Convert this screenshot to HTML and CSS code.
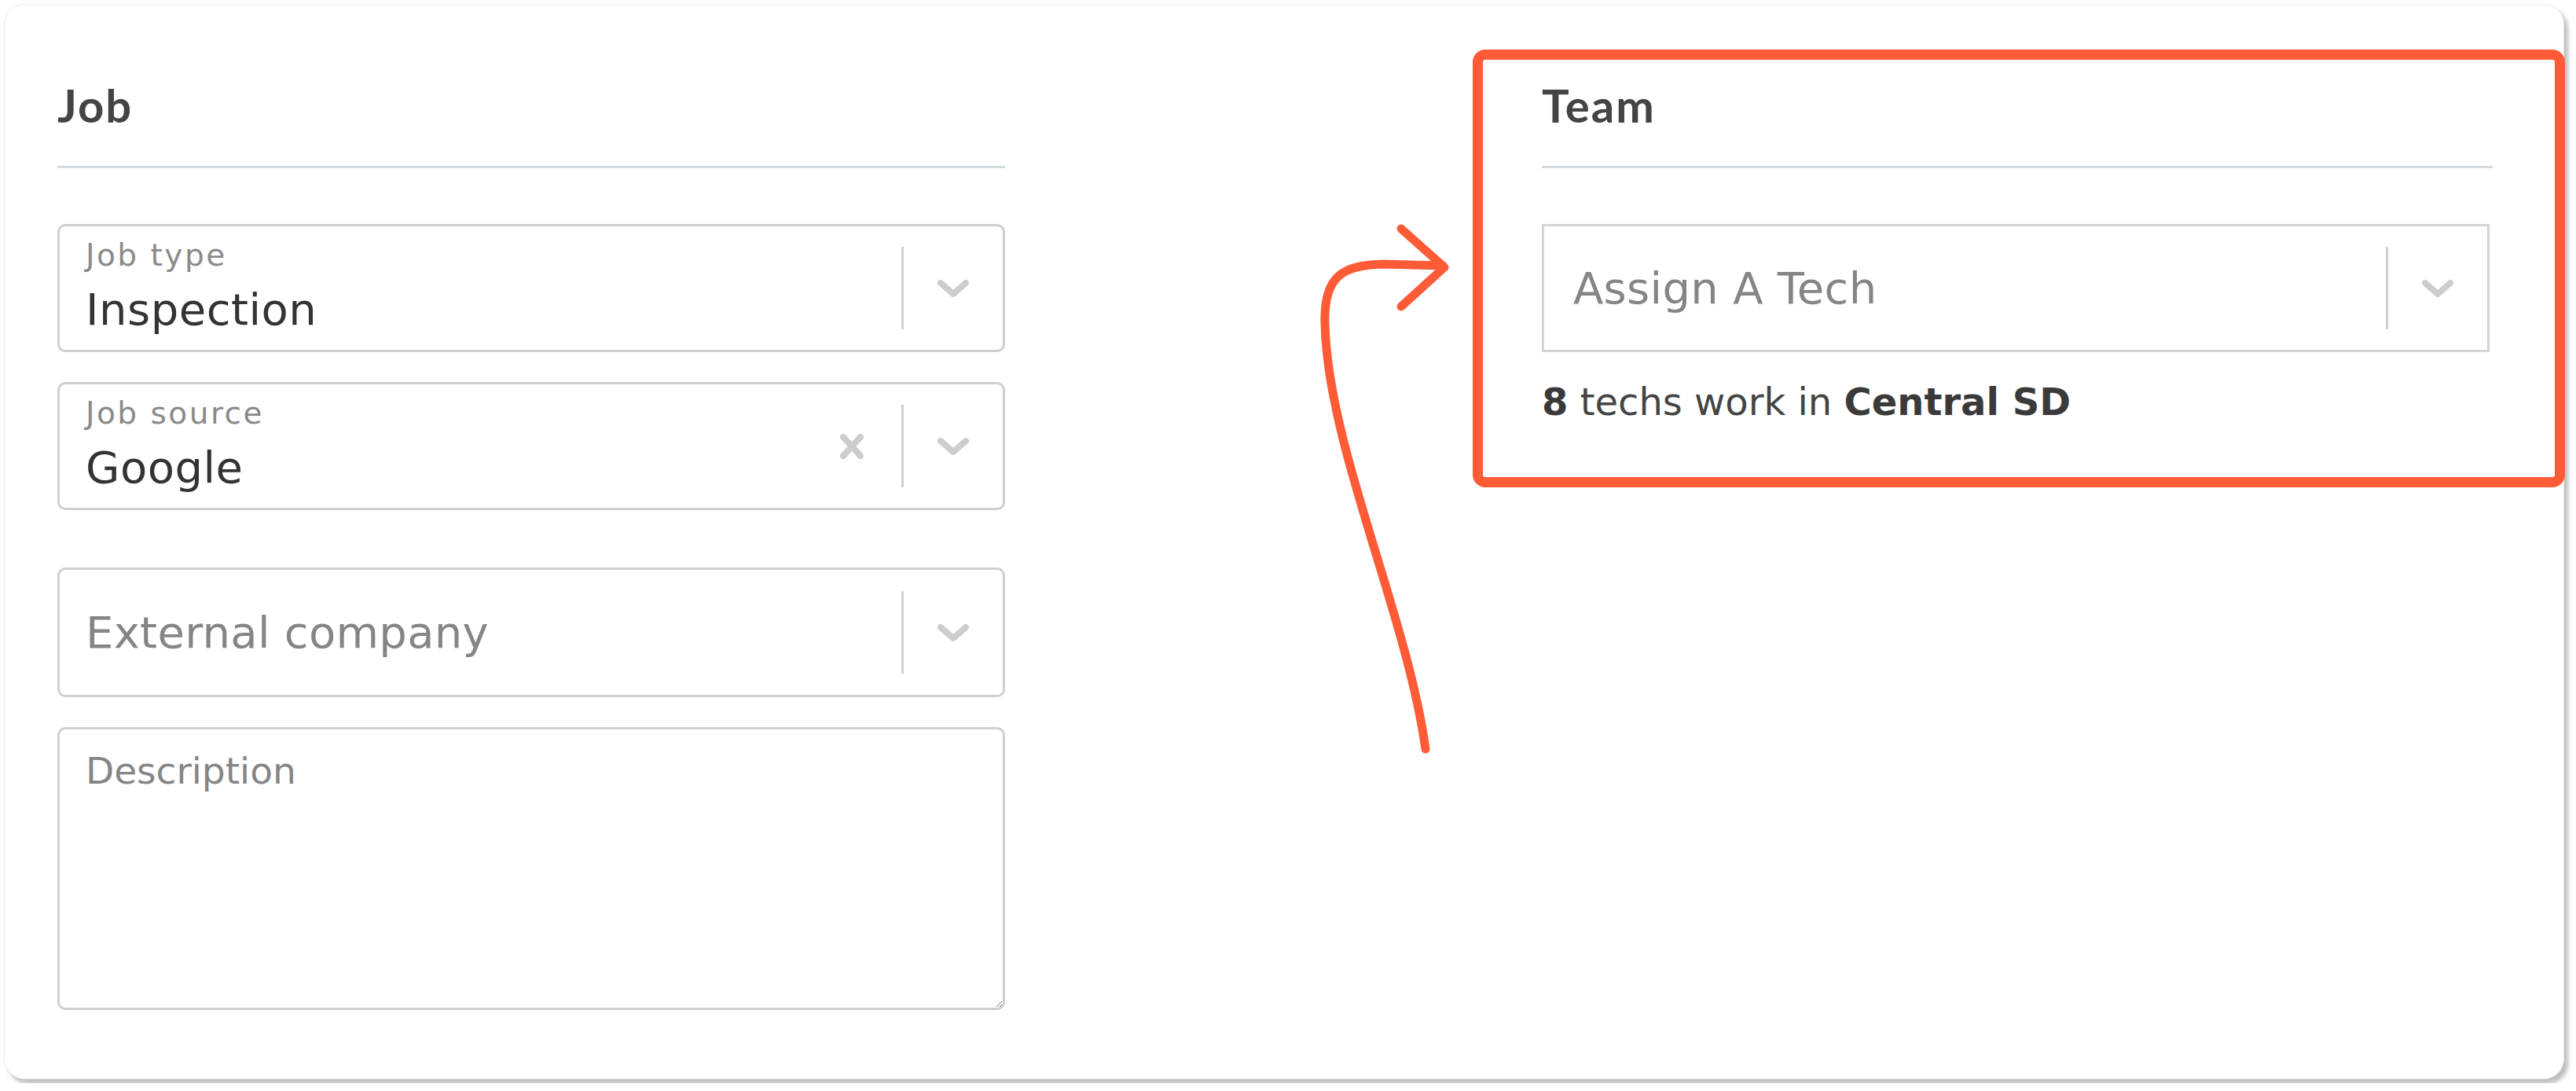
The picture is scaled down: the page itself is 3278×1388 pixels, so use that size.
FILE: index.html
```html
<!DOCTYPE html>
<html lang="en">
<head>
  <meta charset="UTF-8" />
  <meta name="viewport" content="width=device-width, initial-scale=1.0" />
  <title>New Job</title>
  <link rel="stylesheet" href="styles.css">
</head>
<body>
  <div class="card">
    <div class="column">
      <h2 class="section-title">Job</h2>
      <div class="divider"></div>

      <div class="select">
        <div class="select-value filled">
          <span class="float-label">Job type</span>
          <span class="value">Inspection</span>
        </div>
        <div class="indicators">
          <span class="separator"></span>
          <span class="chevron">
            <svg width="40" height="22" viewBox="0 0 40 22"><path d="M4 4 L20 18 L36 4" /></svg>
          </span>
        </div>
      </div>

      <div class="select">
        <div class="select-value filled">
          <span class="float-label">Job source</span>
          <span class="value">Google</span>
        </div>
        <div class="indicators">
          <span class="clear">
            <svg width="32" height="34" viewBox="0 0 32 34"><path d="M5 5 L27 29 M27 5 L5 29" /></svg>
          </span>
          <span class="separator"></span>
          <span class="chevron">
            <svg width="40" height="22" viewBox="0 0 40 22"><path d="M4 4 L20 18 L36 4" /></svg>
          </span>
        </div>
      </div>

      <div class="select spaced">
        <div class="select-value">
          <span class="placeholder">External company</span>
        </div>
        <div class="indicators">
          <span class="separator"></span>
          <span class="chevron">
            <svg width="40" height="22" viewBox="0 0 40 22"><path d="M4 4 L20 18 L36 4" /></svg>
          </span>
        </div>
      </div>

      <textarea class="description" placeholder="Description"></textarea>
    </div>

    <div class="column team">
      <div class="highlight"></div>
      <h2 class="section-title">Team</h2>
      <div class="divider"></div>

      <div class="select square">
        <div class="select-value">
          <span class="placeholder">Assign A Tech</span>
        </div>
        <div class="indicators">
          <span class="separator"></span>
          <span class="chevron">
            <svg width="40" height="22" viewBox="0 0 40 22"><path d="M4 4 L20 18 L36 4" /></svg>
          </span>
        </div>
      </div>

      <p class="team-note"><b>8</b> techs work in <b>Central SD</b></p>
    </div>

    <!-- hand drawn pointer -->
    <svg class="pointer" width="200" height="700" viewBox="1660 270 200 700">
      <path d="M1814 953 C1790 780 1690 570 1686 412 C1684 352 1708 337 1760 336 L1836 338" />
      <path d="M1783 291 L1838 340 L1783 390" />
    </svg>
  </div>
</body>
</html>
```

FILE: styles.css
```css
body {
  margin: 0;
  padding: 5px;
  background: #fff;
  font-family: "DejaVu Sans", sans-serif;
  color: #333;
}

.card {
  position: relative;
  box-sizing: border-box;
  width: 3258px;
  height: 1368px;
  padding: 93px 92px 0 67px;
  display: grid;
  grid-template-columns: 1206px 1210px;
  column-gap: 683px;
  align-items: start;
  background: #fff;
  border: 1px solid #ececec;
  border-radius: 26px;
  box-shadow: 5px 6px 5px rgba(0, 0, 0, 0.25);
}

.column {
  display: flex;
  flex-direction: column;
}

.team {
  position: relative;
}

.section-title {
  margin: 0;
  font-family: "Lato", sans-serif;
  font-weight: bold;
  font-size: 58px;
  line-height: 70px;
  letter-spacing: 2px;
  color: #444;
}

.divider {
  height: 3px;
  margin: 42px 0 71px;
  background: #d3dadd;
}

.select {
  box-sizing: border-box;
  height: 163px;
  display: flex;
  align-items: center;
  border: 3px solid #cfcfcf;
  border-radius: 10px;
  margin-bottom: 38px;
}

.select.spaced {
  height: 165px;
  margin-top: 35px;
}

.select.square {
  width: 1206px;
  border-radius: 0;
  border-color: #d4d4d4;
  margin-bottom: 0;
}

.select-value {
  flex: 1;
  display: flex;
  flex-direction: column;
  padding-left: 33px;
}

.select-value.filled {
  align-self: flex-start;
  padding-top: 14px;
}

.square .select-value {
  padding-left: 37px;
}

.float-label {
  font-size: 39px;
  line-height: 45px;
  letter-spacing: 2.5px;
  color: #8a8a8a;
}

.value {
  margin-top: 14px;
  font-size: 56px;
  line-height: 65px;
  letter-spacing: 0.5px;
  color: #333;
}

.placeholder {
  font-size: 56px;
  line-height: 65px;
  letter-spacing: 0.3px;
  color: #858585;
}

.indicators {
  display: flex;
  align-items: center;
  height: 100%;
}

.separator {
  width: 3px;
  height: 105px;
  background: #d0d0d0;
}

.chevron, .clear {
  display: flex;
  align-items: center;
  justify-content: center;
}

.chevron {
  width: 126px;
}

.clear {
  width: 126px;
}

.chevron path, .clear path {
  fill: none;
  stroke: #cdcdcd;
  stroke-width: 8;
  stroke-linecap: round;
  stroke-linejoin: round;
}

.description {
  box-sizing: border-box;
  height: 360px;
  padding: 25px 33px;
  border: 3px solid #cfcfcf;
  border-radius: 10px;
  font-family: "DejaVu Sans", sans-serif;
  font-size: 47px;
  color: #333;
  resize: vertical;
}

.description::placeholder {
  color: #858585;
}

.team-note {
  margin: 35px 0 0;
  font-size: 48px;
  line-height: 56px;
  color: #444;
}

.team-note b {
  color: #3a3a3a;
}

.highlight {
  position: absolute;
  top: -36px;
  left: -88px;
  width: 1390px;
  height: 557px;
  box-sizing: border-box;
  border: 13px solid #ff5b37;
  border-radius: 16px;
}

.pointer {
  position: absolute;
  left: 1654px;
  top: 264px;
  pointer-events: none;
}

.pointer path {
  fill: none;
  stroke: #ff5b37;
  stroke-width: 11;
  stroke-linecap: round;
  stroke-linejoin: round;
}
```
